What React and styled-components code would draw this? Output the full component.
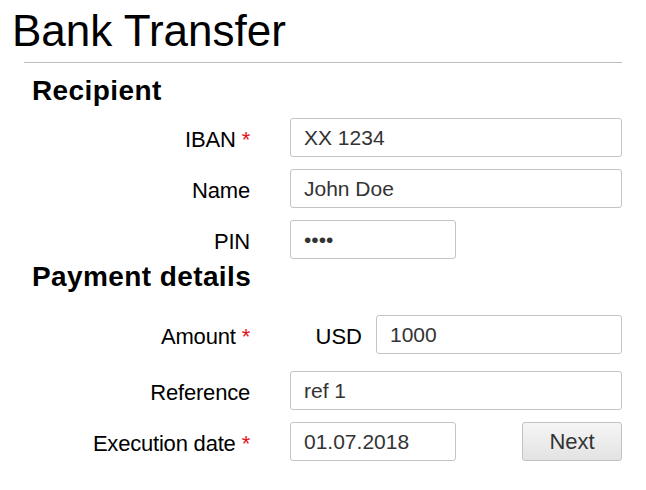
import React from "react";
import styled, { createGlobalStyle } from "styled-components";

const GlobalStyle = createGlobalStyle`
  body {
    margin: 0;
    background: #fff;
    font-family: "Liberation Sans", Arial, sans-serif;
    color: #000;
  }
`;

const Page = styled.div`
  width: 646px;
  padding-top: 6px;
`;

const Title = styled.h1`
  margin: 0 0 0 12px;
  font-size: 44px;
  line-height: 50px;
  font-weight: normal;
  color: #000;
`;

const Divider = styled.hr`
  margin: 6px 24px 0 24px;
  border: 0;
  border-top: 1px solid #bdbdbd;
`;

const Section = styled.h2`
  margin: ${(p) => p.$top}px 0 ${(p) => p.$bottom}px 32px;
  font-size: 28px;
  line-height: 30px;
  letter-spacing: 0.4px;
  font-weight: bold;
  color: #000;
`;

const Row = styled.div`
  display: grid;
  grid-template-columns: 226px 332px;
  column-gap: 40px;
  align-items: center;
  margin: 0 0 ${(p) => p.$gap ?? 12}px 24px;
  height: 39px;
`;

const Label = styled.label`
  text-align: right;
  font-size: 22px;
  letter-spacing: -0.2px;
  padding-top: 4px;
  color: #000;
  white-space: nowrap;
`;

const Required = styled.span`
  color: #e8141b;
  margin-left: 6px;
`;

const Input = styled.input`
  box-sizing: border-box;
  width: ${(p) => p.$width || "100%"};
  min-width: 0;
  flex: ${(p) => (p.$width ? "none" : "1")};
  height: 39px;
  padding: 0 13px;
  border: 1px solid #c4c4c4;
  border-radius: 3px;
  font-family: "Liberation Sans", Arial, sans-serif;
  font-size: 21px;
  color: #333;
  background: #fff;
  outline: none;
`;

const Inline = styled.div`
  display: flex;
  align-items: center;
  justify-content: ${(p) => p.$justify || "flex-start"};
`;

const Currency = styled.span`
  flex: none;
  width: 72px;
  margin-right: 14px;
  text-align: right;
  font-size: 22px;
  padding-top: 4px;
  color: #000;
`;

const Button = styled.button`
  box-sizing: border-box;
  width: 100px;
  height: 39px;
  border: 1px solid #c2c2c2;
  border-radius: 3px;
  background: linear-gradient(#f5f5f5, #e3e3e3);
  font-family: "Liberation Sans", Arial, sans-serif;
  font-size: 22px;
  color: #333;
  cursor: pointer;
`;

export default function App() {
  return (
    <Page>
      <GlobalStyle />
      <Title>Bank Transfer</Title>
      <Divider />

      <Section $top={13} $bottom={12}>Recipient</Section>
      <Row>
        <Label>
          IBAN<Required>*</Required>
        </Label>
        <Input defaultValue="XX 1234" />
      </Row>
      <Row>
        <Label>Name</Label>
        <Input defaultValue="John Doe" />
      </Row>
      <Row $gap={0}>
        <Label>PIN</Label>
        <Input type="password" defaultValue="1234" $width="166px" />
      </Row>

      <Section $top={3} $bottom={23}>Payment details</Section>
      <Row $gap={17}>
        <Label>
          Amount<Required>*</Required>
        </Label>
        <Inline>
          <Currency>USD</Currency>
          <Input defaultValue="1000" />
        </Inline>
      </Row>
      <Row>
        <Label>Reference</Label>
        <Input defaultValue="ref 1" />
      </Row>
      <Row>
        <Label>
          Execution date<Required>*</Required>
        </Label>
        <Inline $justify="space-between">
          <Input defaultValue="01.07.2018" $width="166px" />
          <Button>Next</Button>
        </Inline>
      </Row>
    </Page>
  );
}
